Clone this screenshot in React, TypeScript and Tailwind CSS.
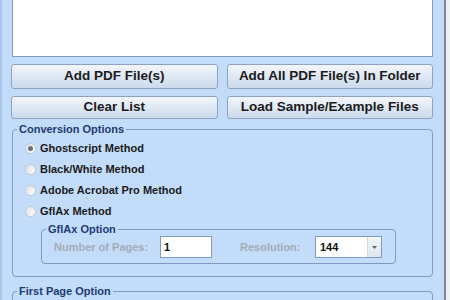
const btn =
  'flex items-center justify-center rounded-[3px] border border-[#8ea3bf] bg-linear-to-b from-[#f2f6fb] via-[#dfe8f4] to-[#cbdaec] text-[13.5px] font-bold text-[#1b1b1b]';

function Radio({ checked }: { checked?: boolean }) {
  return (
    <span className="w-[11px] h-[11px] rounded-full border border-[#c3c8ce] bg-linear-to-br from-[#dfe3e7] to-[#fbfcfd] flex items-center justify-center shrink-0">
      {checked && <span className="w-[5px] h-[5px] rounded-full bg-[#6b727b]" />}
    </span>
  );
}

const methods = ['Ghostscript Method', 'Black/White Method', 'Adobe Acrobat Pro Method', 'GflAx Method'];

export default function App() {
  return (
    <div className="w-[450px] h-[300px] overflow-hidden flex bg-[#c3dcfa] font-['Liberation_Sans',Arial,sans-serif]">
      <div className="w-[444px] h-full shrink-0 border-l-2 border-[#a6c5ec] pl-[9px] pr-[11px] flex flex-col">
        {/* file list */}
        <div className="h-[58px] ml-[1px] -mt-[1px] bg-white border-x border-b border-[#7f9db9] shrink-0" />

        {/* buttons */}
        <div className="grid grid-cols-2 gap-x-[9px] gap-y-[7px] mt-[7px]">
          <button className={`${btn} h-[25px]`}>Add PDF File(s)</button>
          <button className={`${btn} h-[25px]`}>Add All PDF File(s) In Folder</button>
          <button className={`${btn} h-[23px]`}>Clear List</button>
          <button className={`${btn} h-[23px]`}>Load Sample/Example Files</button>
        </div>

        {/* Conversion Options */}
        <fieldset className="mt-[3px] ml-[1px] border border-[#7f9cbf] rounded-[4px] pb-[12px]">
          <legend className="ml-[4px] px-[2px] text-[11px] leading-[14px] font-bold text-[#1d3b72]">
            Conversion Options
          </legend>
          <div className="pt-[2px]">
            {methods.map((m, i) => (
              <div key={m} className="h-[21px] flex items-center gap-[4px] pl-[12px]">
                <Radio checked={i === 0} />
                <span className="text-[11px] font-bold text-[#1a1a1a]">{m}</span>
              </div>
            ))}
          </div>

          <fieldset className="ml-[28px] mr-[36px] border border-[#7f9cbf] rounded-[4px] pb-[5px]">
            <legend className="ml-[4px] px-[2px] text-[11px] leading-[14px] font-bold text-[#1d3b72]">
              GflAx Option
            </legend>
            <div className="h-[22px] flex items-center pl-[12px]">
              <span className="w-[106px] text-[11px] font-bold text-[#a4acb7]">Number of Pages:</span>
              <div className="w-[52px] h-[22px] bg-white border border-[#7f9db9] flex items-center pl-[3px] text-[11px] font-bold text-[#111]">
                1
              </div>
              <span className="ml-[28px] w-[75px] text-[11px] font-bold text-[#a4acb7]">Resolution:</span>
              <div className="w-[67px] h-[22px] bg-white border border-[#7f9db9] flex items-stretch">
                <span className="flex-1 flex items-center pl-[4px] text-[11px] font-bold text-[#111]">144</span>
                <span className="w-[14px] border-l border-[#d4dce6] bg-linear-to-b from-[#f3f6fa] to-[#dde5ef] flex items-center justify-center">
                  <svg width="5" height="3" viewBox="0 0 5 3">
                    <path d="M0 0h5L2.5 3z" fill="#5b6470" />
                  </svg>
                </span>
              </div>
            </div>
          </fieldset>
        </fieldset>

        {/* First Page Option */}
        <fieldset className="mt-[7px] ml-[1px] border border-[#7f9cbf] rounded-[4px] h-[60px] shrink-0">
          <legend className="ml-[4px] px-[2px] text-[11px] leading-[14px] font-bold text-[#1d3b72]">
            First Page Option
          </legend>
        </fieldset>
      </div>
      <div className="flex-1 border-l-2 border-[#7b8795] bg-[#eef0f3]" />
    </div>
  );
}
